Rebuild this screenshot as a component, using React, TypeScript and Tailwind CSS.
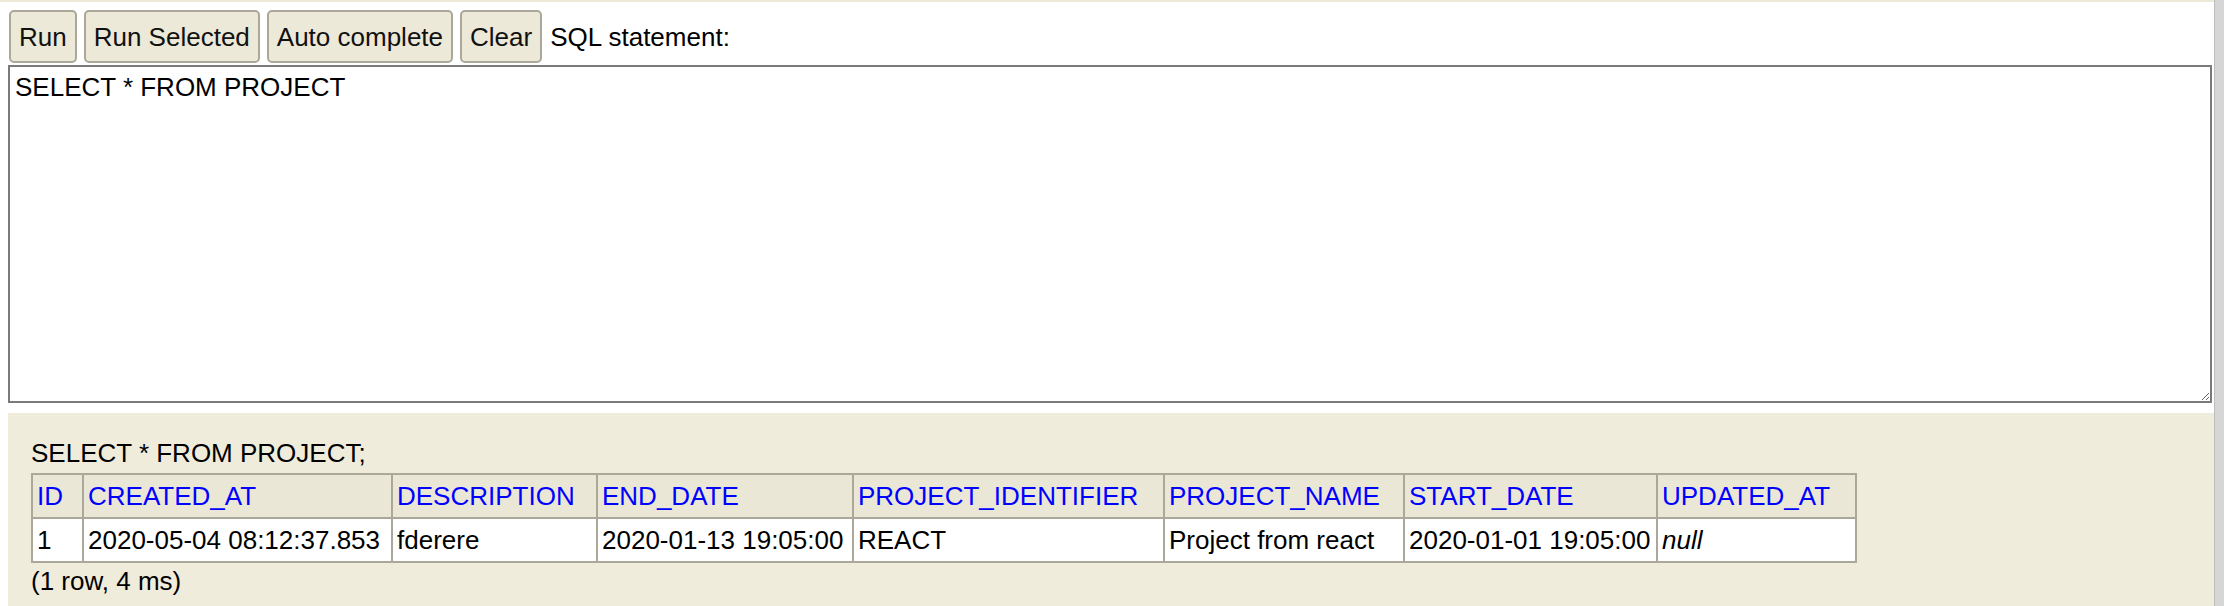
const BUTTONS = ['Run', 'Run Selected', 'Auto complete', 'Clear']

const COLUMNS: { name: string; width: string }[] = [
  { name: 'ID', width: 'w-[51px]' },
  { name: 'CREATED_AT', width: 'w-[309px]' },
  { name: 'DESCRIPTION', width: 'w-[205px]' },
  { name: 'END_DATE', width: 'w-[256px]' },
  { name: 'PROJECT_IDENTIFIER', width: 'w-[311px]' },
  { name: 'PROJECT_NAME', width: 'w-[240px]' },
  { name: 'START_DATE', width: 'w-[253px]' },
  { name: 'UPDATED_AT', width: 'w-[199px]' },
]

const ROW = ['1', '2020-05-04 08:12:37.853', 'fderere', '2020-01-13 19:05:00', 'REACT', 'Project from react', '2020-01-01 19:05:00']

export default function App() {
  return (
    <div className="flex h-[606px] overflow-hidden bg-white font-['Liberation_Sans',Arial,sans-serif] text-[26px] leading-[30px] text-black">
      <div className="flex min-w-0 flex-1 flex-col">
        <div className="h-[2px] bg-[#ece9d8]" />

        {/* toolbar */}
        <div className="flex items-center gap-[7px] pl-[9px] pt-[8px]">
          {BUTTONS.map((b) => (
            <button
              key={b}
              className="h-[53px] rounded-[5px] border-2 border-[#aca899] bg-[#ece9d8] px-[8px] text-[#111]"
            >
              {b}
            </button>
          ))}
          <span className="ml-[1px]">SQL statement:</span>
        </div>

        <div className="ml-[8px] mr-[2px] mt-[2px]">
          <textarea
            readOnly
            defaultValue="SELECT * FROM PROJECT"
            className="block h-[338px] w-full border-2 border-[#7a7a7a] bg-white px-[5px] pt-[5px] text-[26px] leading-[30px] outline-none"
          />
        </div>

        {/* results */}
        <div className="ml-[8px] mt-[10px] flex-1 bg-[#f0ecdc] pl-[23px] pt-[25px]">
          <div>SELECT * FROM PROJECT;</div>
          <table className="mt-[5px] w-[1824px] table-fixed border-collapse border-2 border-[#aca899]">
            <colgroup>
              {COLUMNS.map((c) => (
                <col key={c.name} className={c.width} />
              ))}
            </colgroup>
            <thead>
              <tr>
                {COLUMNS.map((c) => (
                  <th
                    key={c.name}
                    className="border-2 border-[#aca899] bg-[#ebe7d7] px-[4px] py-[6px] text-left font-normal whitespace-nowrap text-[#0000ff]"
                  >
                    {c.name}
                  </th>
                ))}
              </tr>
            </thead>
            <tbody>
              <tr>
                {ROW.map((v, i) => (
                  <td key={i} className="border-2 border-[#aca899] bg-white px-[4px] py-[6px] whitespace-nowrap">
                    {v}
                  </td>
                ))}
                <td className="border-2 border-[#aca899] bg-white px-[4px] py-[6px] italic">null</td>
              </tr>
            </tbody>
          </table>
          <div className="mt-[3px]">(1 row, 4 ms)</div>
        </div>
      </div>

      {/* window scrollbar */}
      <div className="w-[10px] border-l border-[#bcbcbc] bg-[#d6d6d6]" />
    </div>
  )
}
